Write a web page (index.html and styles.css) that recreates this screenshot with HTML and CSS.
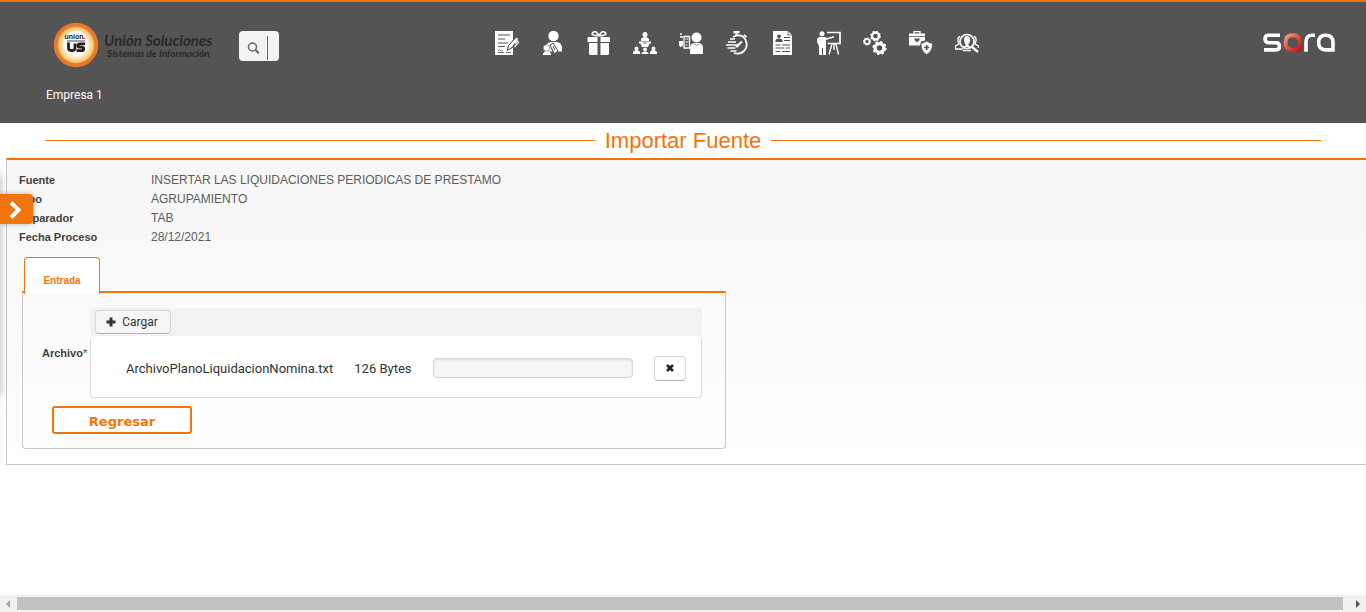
FILE: index.html
```html
<!DOCTYPE html>
<html lang="es">
<head>
<meta charset="utf-8">
<title>Importar Fuente</title>
<link rel="stylesheet" href="styles.css">
</head>
<body>
<header class="topbar">
  <div class="topbar-row">
    <div class="topbar-left">
      <div class="brand">
        <svg class="brand-mark" viewBox="0 0 46 46" aria-hidden="true">
          <defs>
            <radialGradient id="ring"><stop offset="0" stop-color="#fff"/><stop offset=".6" stop-color="#fff8e8"/><stop offset="1" stop-color="#f3c66a"/></radialGradient>
          </defs>
          <circle cx="23" cy="23" r="22.3" fill="#e8792a"/>
          <circle cx="23" cy="23" r="18.5" fill="#f9a84c"/>
          <circle cx="23" cy="23" r="17.6" fill="url(#ring)"/>
          <circle cx="23" cy="21.5" r="12.5" fill="#fff"/>
          <text class="mark-top" x="21" y="17" text-anchor="middle">union</text>
          <path d="M29 16.500h3" stroke="#d33" stroke-width="1"/>
          <path d="M14 19h18" stroke="#444" stroke-width="1"/>
          <path d="M15.500 20.500v5q0 3 2.500 3h1.500q2.500 0 2.500-3v-4M32 21.800h-5q-2 0-2 1.700t2 1.700h1.500q2.200 0 2.200 1.700t-2.200 1.700h-5" fill="none" stroke="#222" stroke-width="2.800"/>
        </svg>
        <div class="brand-text">
          <span class="brand-name">Unión Soluciones</span>
          <span class="brand-tag">Sistemas de Información</span>
        </div>
      </div>
      <button class="search" type="button" aria-label="Buscar">
        <svg viewBox="0 0 40 30" aria-hidden="true"><circle cx="13.500" cy="16" r="4" fill="none" stroke="#666" stroke-width="1.500"/><path d="M16.500 19l3.300 3.300" stroke="#666" stroke-width="2"/><path d="M28.500 5v24" stroke="#666"/></svg>
      </button>
    </div>
    <nav class="modules" aria-label="Módulos">
      <a href="#" aria-label="Contratos"><svg viewBox="0 0 24 24"><path d="M0 0h18v9l-5 6-1 4 4-1 2-2v8H0z" fill="#fff"/><path d="M3 4h12M3 8h7M3 12h10M3 15.500h7" stroke="#545454" stroke-width="1"/><path d="M3 19.500q1.500-1.500 2.500 0t2.500-.5M3 21.500h6M11 21.500h5" stroke="#777" fill="none"/><path d="M12.500 19.500l1-5L21 6.500q2-1 2.500 1.500l-7 9z" fill="#fff" stroke="#545454" stroke-width="1"/><path d="M20 12.500l2.500-2.500 1 1.500-4 4.500" fill="none" stroke="#fff" stroke-width="1.200"/></svg></a>
      <a href="#" aria-label="Empleados"><svg viewBox="0 0 24 24"><circle cx="12.500" cy="5" r="5.200" fill="#fff"/><path d="M5 14q2-3 5-3h6q5 1 5 6v3.500H7z" fill="#fff"/><circle cx="5.500" cy="17" r="3.300" fill="#fff" stroke="#545454" stroke-width=".6"/><path d="M2 23q1-3 4-3t4 3v1H2z" fill="#fff"/><path d="M9 14l3-2 5 8-4 3z" fill="#fff" stroke="#545454" stroke-width="1"/><path d="M12 15l2 4M10.500 17l2 4" stroke="#545454" fill="none"/></svg></a>
      <a href="#" aria-label="Beneficios"><svg viewBox="0 0 24 24"><path d="M1 6h9.500v5H.5V7zM13.500 6H23v5h-9.500zM2 12h8.500v12H3l-1-1zM13.500 12H22v11l-1 1h-7.500z" fill="#fff"/><path d="M12 4.500Q6 5 5 3q1-3 4-2l3 3 3-3q3-1 4 2-1 2-7 1.500z" fill="none" stroke="#fff" stroke-width="1.600"/></svg></a>
      <a href="#" aria-label="Organigrama"><svg viewBox="0 0 24 24" fill="#fff"><circle cx="12" cy="3.500" r="2.500"/><path d="M8 10V8q1-2 4-2t4 2v2zM6 10.500h12v2h-1.500L15 16H9l-1.500-3.500H6z"/><circle cx="3.500" cy="17.500" r="1.900"/><circle cx="12" cy="18.500" r="1.900"/><circle cx="20.500" cy="17.500" r="1.900"/><path d="M0 23v-2q1-2 3.500-2T7 21v2zM8.500 23v-1q1-1.500 3.500-1.500t3.500 1.500v1zM17 23v-2q1-2 3.500-2t3.500 2v2z"/><path d="M10.500 12h3" stroke="#545454"/></svg></a>
      <a href="#" aria-label="Selección"><svg viewBox="0 0 24 24"><circle cx="17.500" cy="6.500" r="5" fill="#fff"/><path d="M11 23v-7q1-4 5-4h3q5 0 5 5v6z" fill="#fff"/><path d="M15 13l2.500 1.500L20 13" fill="none" stroke="#777" stroke-width=".8"/><path d="M5 5.500h5.500v11.500H5z" fill="none" stroke="#fff" stroke-width="1.300"/><path d="M6.500 8h3M6.500 11h3M6.500 14h2" stroke="#fff"/><path d="M1 3h2M1 6h3" stroke="#fff" stroke-width="1.600"/><path d="M0 10h4v5l-3 1-1-2z" fill="#fff"/></svg></a>
      <a href="#" aria-label="Tiempos"><svg viewBox="0 0 24 24" fill="none" stroke="#fff"><path d="M8 6q8-4 12 2 4 7-1 12-4 4-10 2" stroke-width="1.800"/><path d="M8.500 1.200h6M11.500 1v3" stroke-width="2.300"/><path d="M19 4l2.500 2" stroke-width="2"/><path d="M5 8h5M3 11h8M1 14h10M2.500 17h8M5.500 20h6" stroke-width="1.300"/><path d="M11 16L17 10.500" stroke-width="1.800"/><circle cx="12.500" cy="14.500" r="1.300" fill="#fff"/></svg></a>
      <a href="#" aria-label="Hoja de vida"><svg viewBox="0 0 24 24"><path d="M2 0h15l4 4v20H2z" fill="#fff"/><path d="M17 0v4h4" fill="none" stroke="#545454" stroke-width=".8"/><g fill="#545454"><circle cx="8" cy="5.300" r="1.900"/><path d="M4.500 11V9Q5 7.500 8 7.500T11.500 9v2z"/></g><path d="M13 6.500h6M13 9.500h6M4.500 14h5M11 14h8M4.500 17h9M15 17h4M4.500 20.500h5M11 20.500h8" stroke="#545454" stroke-width="1.200"/></svg></a>
      <a href="#" aria-label="Capacitación"><svg viewBox="0 0 24 24" fill="none" stroke="#fff"><circle cx="5" cy="2.700" r="2.500" fill="#fff" stroke="none"/><path d="M2 6h6l2 1 7-2v1.500L9 9v15H6v-7H5v7H2v-9L0 11V8z" fill="#fff" stroke="none"/><path d="M10 1.500h13v11H10.500" stroke-width="1.700"/><path d="M15 13l-3 10.500M19 13l2.500 10.500M17 13v6" stroke-width="1.400"/></svg></a>
      <a href="#" aria-label="Configuración"><svg viewBox="0 0 24 24" fill="none" stroke="#fff"><circle cx="12.500" cy="5" r="3.500" stroke-width="2.400"/><circle cx="12.500" cy="5" r="4.700" stroke-width="1.200" stroke-dasharray="2 1.700"/><circle cx="4" cy="10.500" r="2.600" stroke-width="1.900"/><circle cx="4" cy="10.500" r="3.600" stroke-dasharray="1.400 1.400"/><circle cx="16.500" cy="17" r="4.400" stroke-width="3.200"/><circle cx="16.500" cy="17" r="6.300" stroke-width="1.600" stroke-dasharray="2.600 2.300"/></svg></a>
      <a href="#" aria-label="Seguridad y salud"><svg viewBox="0 0 24 24" fill="#fff"><path d="M0 2.500h16v7l-4 1-1 4H0z"/><path d="M5 3V.7h6V3" fill="none" stroke="#fff" stroke-width="1.300"/><path d="M0 5.500h16" stroke="#545454" stroke-width=".8"/><path d="M8 11.500L5.500 9q-.5-2 1-2L8 8l1.500-1q1.500 0 1 2z" fill="#545454"/><path d="M12 12.500q3-.5 5.500-2.500 2.500 2 6 2.500 0 8-6 11-5.500-3-5.500-11z" stroke="#545454" stroke-width=".6"/><path d="M17.700 14v5M15.200 16.500h5" stroke="#545454" stroke-width="1.600"/></svg></a>
      <a href="#" aria-label="Consultas"><svg viewBox="0 0 24 24" fill="none" stroke="#fff"><circle cx="12" cy="10.500" r="7" stroke-width="1.700"/><path d="M12 5q-3 0-3 4 0 3 1.500 4v1.500L8 16h8l-2.500-1.500V13q1.500-1 1.500-4 0-4-3-4z" fill="#fff" stroke="none"/><path d="M17 16l6 5" stroke-width="2.300"/><path d="M5 5.500Q2.500 6 3 10l1 3-3.500 2v3H8M19 5.500q2.500.5 2 4.500l-1 3 3.500 2v2M8 19.500h8" stroke-width="1.300"/></svg></a>
    </nav>
    <svg class="sara" viewBox="0 0 72 20" role="img" aria-label="sara">
      <defs><linearGradient id="red" x1="0" y1="0" x2="1" y2="1"><stop offset="0" stop-color="#f0a080"/><stop offset=".5" stop-color="#e0503c"/><stop offset="1" stop-color="#c01820"/></linearGradient></defs>
      <g fill="none" stroke="#fff" stroke-width="3.600">
        <path d="M17 2.200H5.500q-3.500 0-3.500 3.500T5.500 9.700H13q3.500 0 3.500 3.500t-3.500 3.700H1"/>
        <path d="M43 18.700V9q0-6.800 6-6.800h3"/>
        <path d="M70 16.900V9.500q0-7.300-7.200-7.300t-7.200 7.300 7.200 7.400z"/>
      </g>
      <path d="M36.900 16.900V9.500q0-7.300-7.200-7.300t-7.200 7.300 7.200 7.400z" fill="none" stroke="url(#red)" stroke-width="4"/>
    </svg>
  </div>
  <p class="company">Empresa 1</p>
</header>

<main class="page">
  <h1 class="page-title">Importar Fuente</h1>
  <section class="panel">
    <table class="details">
      <tr><th scope="row">Fuente</th><td>INSERTAR LAS LIQUIDACIONES PERIODICAS DE PRESTAMO</td></tr>
      <tr><th scope="row">Tipo</th><td>AGRUPAMIENTO</td></tr>
      <tr><th scope="row">Separador</th><td>TAB</td></tr>
      <tr><th scope="row">Fecha Proceso</th><td>28/12/2021</td></tr>
    </table>
    <div class="tabs">
      <div class="tab-list" role="tablist"><button class="tab" type="button" role="tab" aria-selected="true">Entrada</button></div>
      <div class="tab-body" role="tabpanel">
        <div class="field">
          <span class="field-label" id="archivo">Archivo<span class="required">*</span></span>
          <div class="upload" role="group" aria-labelledby="archivo">
            <div class="upload-bar">
              <button class="btn" type="button"><svg viewBox="0 0 10 10" aria-hidden="true"><path d="M5 .5v9M.5 5h9" stroke="#333" stroke-width="3"/></svg>Cargar</button>
            </div>
            <div class="upload-file">
              <span>ArchivoPlanoLiquidacionNomina.txt</span>
              <span>126 Bytes</span>
              <div class="progress" role="progressbar" aria-valuenow="0" aria-label="Progreso"></div>
              <button class="btn btn-icon" type="button" aria-label="Quitar"><svg viewBox="0 0 10 10" aria-hidden="true"><path d="M2 2l6 6M8 2L2 8" stroke="#222" stroke-width="2.600"/></svg></button>
            </div>
          </div>
        </div>
        <button class="back" type="button">Regresar</button>
      </div>
    </div>
  </section>
  <div class="drawer-edge"></div>
  <button class="drawer-toggle" type="button" aria-label="Abrir menú"><svg viewBox="0 0 14 18" aria-hidden="true"><path d="M2 1.500L9.500 9 2 16.500" fill="none" stroke="#fff" stroke-width="4"/></svg></button>
</main>

<div class="scroll" aria-hidden="true">
  <svg viewBox="0 0 17 17"><path d="M10 5v8L6 9z" fill="#a3a3a3"/></svg>
  <div class="scroll-thumb"></div>
  <svg viewBox="0 0 17 17"><path d="M7 5v8l4-4z" fill="#505050"/></svg>
</div>
</body>
</html>
```
FILE: styles.css
```css
* { box-sizing: border-box; }

body {
  margin: 0;
  min-height: 100vh;
  display: flex;
  flex-direction: column;
  background: #fff;
  color: #333;
  font-family: "Liberation Sans", Arial, sans-serif;
  font-size: 12px;
}

svg { display: block; }
button { font: inherit; cursor: pointer; }

/* Header */
.topbar {
  border-top: 2px solid #f2740d;
  background: #545454;
  padding: 20px 31px 20px 46px;
}
.topbar-row { display: flex; align-items: center; height: 46px; }
.topbar-left { display: flex; align-items: center; gap: 24px; flex: 0 0 449px; padding-left: 7px; }
.brand { display: flex; align-items: center; gap: 5px; width: 162px; }
.brand-mark { width: 46px; height: 46px; flex: none; }
.mark-top { font: bold 7px "Liberation Sans", sans-serif; fill: #222; }
.brand-text {
  display: flex;
  flex-direction: column;
  font-family: Lato, sans-serif;
  font-style: italic;
  font-weight: 700;
  color: #2b2829;
  white-space: nowrap;
}
.brand-name { font-size: 15px; line-height: 16px; }
.brand-tag { font-size: 10px; line-height: 10px; padding-left: 3px; }
.search { width: 40px; height: 30px; margin-top: 2px; padding: 0; border: 0; border-radius: 4px; background: #f3f3f3; }
.modules { display: flex; gap: 22px; }
.modules svg { width: 24px; height: 24px; }
.modules a { margin-bottom: 4px; }
.sara { width: 72px; height: 20px; margin: 0 0 4px auto; }
.company { margin: 19px 0 0; color: #fff; font-family: Roboto, sans-serif; font-size: 12px; line-height: 16px; }

/* Page */
.page { position: relative; flex: 1; padding-left: 6px; }
.page-title {
  display: flex;
  align-items: center;
  gap: 10px;
  margin: 0;
  padding: 0 45px 0 39px;
  height: 35px;
  color: #f2740d;
  font-size: 22px;
  font-weight: 400;
  line-height: 24px;
}
.page-title::before, .page-title::after { content: ""; flex: 1; height: 1px; background: #f2740d; }
.panel {
  border: 1px solid #c8c8c8;
  border-width: 2px 0 1px 1px;
  border-top-color: #f2740d;
  padding: 11px 12px 15px;
  background: linear-gradient(#f6f6f6, #fff);
}
.details { border-collapse: collapse; }
.details th, .details td { height: 19px; padding: 0; line-height: 19px; text-align: left; }
.details th { width: 132px; font-size: 11px; color: #404040; }
.details td { color: #5c5c5c; }

/* Tabs */
.tabs { width: 704px; max-width: 100%; margin: 10px 0 0 3px; }
.tab-list { display: flex; padding-left: 2px; }
.tab {
  position: relative;
  z-index: 1;
  width: 76px;
  height: 37px;
  margin-bottom: -3px;
  padding: 9px 0 0;
  border: 1px solid #f2740d;
  border-bottom: 0;
  border-radius: 4px 4px 0 0;
  background: #fff;
  color: #f2740d;
  font-size: 10px;
  font-weight: 700;
}
.tab-body {
  border: 1px solid #c8c8c8;
  border-top: 2px solid #f2740d;
  border-radius: 0 0 4px 4px;
  padding: 15px 23px 14px 19px;
}
.field { display: flex; align-items: center; }
.field-label { width: 48px; font-size: 11px; font-weight: 700; color: #404040; }
.required { font-weight: 400; }
.upload { flex: 1; font-family: Roboto, sans-serif; }
.upload-bar { height: 28px; padding: 2px 5px; border-radius: 4px 4px 0 0; background: #f2f2f2; }
.upload-file {
  display: flex;
  align-items: center;
  gap: 21px;
  height: 62px;
  padding: 3px 12px 0 35px;
  border: 1px solid #ddd;
  border-top: 0;
  border-radius: 4px;
  background: #fff;
  font-size: 13px;
  white-space: nowrap;
}
.btn {
  display: flex;
  align-items: center;
  justify-content: center;
  gap: 6px;
  width: 76px;
  height: 24px;
  padding: 0 2px 0 0;
  border: 1px solid #d6d6d6;
  border-bottom-color: #b3b3b3;
  border-radius: 4px;
  background: #f6f6f6;
  color: #333;
}
.btn svg { width: 10px; height: 10px; }
.btn-icon { width: 32px; height: 25px; padding: 0; background: #fff; }
.progress {
  width: 200px;
  height: 20px;
  border: 1px solid #d6d6d6;
  border-radius: 4px;
  background: #f6f6f6;
  box-shadow: inset 0 1px 2px rgba(0, 0, 0, .1);
}
.back {
  display: block;
  width: 140px;
  height: 28px;
  margin: 8px 0 0 10px;
  padding: 2px 0 0;
  border: 2px solid #f2740d;
  border-radius: 3px;
  background: #fff;
  color: #f2740d;
  font-family: "DejaVu Sans", Verdana, sans-serif;
  font-size: 13px;
  font-weight: 700;
}

/* Collapsed side drawer */
.drawer-edge { position: absolute; left: -10px; top: 51px; width: 10px; height: 222px; box-shadow: 0 0 8px rgba(0, 0, 0, .3); }
.drawer-toggle {
  position: absolute;
  left: 0;
  top: 71px;
  width: 33px;
  height: 30px;
  padding: 2px 0 0 9px;
  border: 0;
  border-radius: 0 4px 4px 0;
  background: #f2740d;
  box-shadow: 0 0 5px rgba(0, 0, 0, .3);
}
.drawer-toggle svg { width: 14px; height: 18px; }

/* Horizontal scroll bar */
.scroll { display: flex; height: 17px; background: #f1f1f1; }
.scroll svg { width: 17px; height: 17px; }
.scroll-thumb { flex: 1; margin: 2px 6px 2px 0; background: #c1c1c1; }
```
